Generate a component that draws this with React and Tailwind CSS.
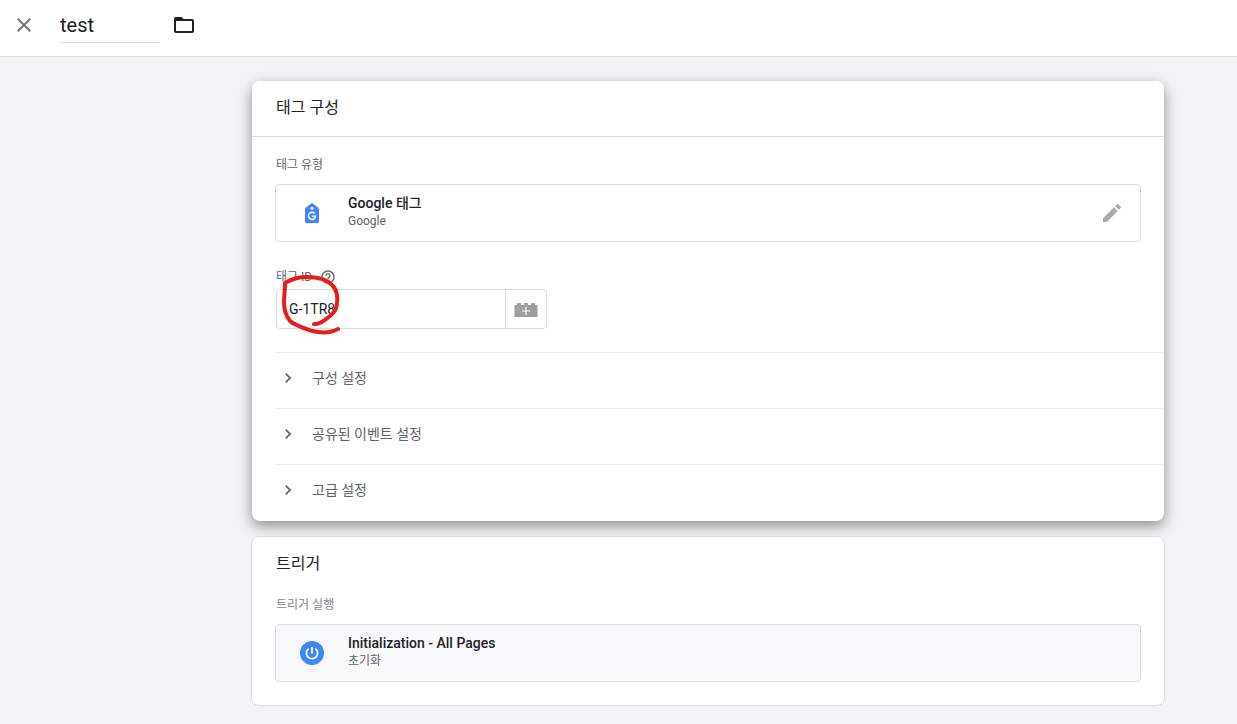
import React, { useState } from 'react';
import { MdEdit, MdHelpOutline, MdChevronRight, MdClose } from 'react-icons/md';

const FolderIcon = () => (
  <svg width="24" height="24" viewBox="0 0 24 24" aria-hidden="true">
    <path fill="#202124" d="M4 4H9.5L11.5 6H20Q22 6 22 8V18Q22 20 20 20H4Q2 20 2 18V6Q2 4 4 4Z" />
    <rect x="4" y="8" width="16" height="10" fill="#fff" />
  </svg>
);

const TagIcon = () => (
  <svg width="14" height="20" viewBox="0 0 14 20" aria-hidden="true">
    <path fill="#4285f4" d="M7 0 12.9 4.5Q14 5.4 14 6.6V18.5Q14 20 12.5 20H1.5Q0 20 0 18.5V6.6Q0 5.4 1.1 4.5Z" />
    <circle cx="7" cy="5.3" r="1.5" fill="#fff" />
    <path fill="none" stroke="#fff" strokeWidth="1.5" d="M9.6 10.5A3.5 3.5 0 1 0 10.5 13.2H7.2" />
  </svg>
);

const PowerIcon = () => (
  <svg width="24" height="24" viewBox="0 0 24 24" aria-hidden="true">
    <circle cx="12" cy="12" r="12" fill="#4285f4" />
    <path fill="none" stroke="#fff" strokeWidth="1.8" d="M12 6V12.6M8.6 7.6A5.6 5.6 0 1 0 15.4 7.6" />
  </svg>
);

const BrickIcon = () => (
  <svg width="24" height="16" viewBox="0 0 24 16" aria-hidden="true">
    <path fill="#9e9e9e" d="M3 2H7V4H10V2H14V4H17V2H21V4H23.5V16H.5V4H3Z" />
    <path fill="none" stroke="#fff" strokeWidth="1.2" d="M12 6V14M8 10H16" />
  </svg>
);

const RedCircle = () => (
  <svg className="pointer-events-none absolute -top-5 left-1" width="64" height="66" viewBox="281 270 64 66" aria-hidden="true">
    <path
      fill="none"
      stroke="#e81c1c"
      strokeWidth="4"
      strokeLinecap="round"
      strokeLinejoin="round"
      d="M314 324C319 325 325 320 330 316C335 312 337 308 337 303C338 296 337 290 332 285C326 278 316 277 306 277C298 277 290 280 285 283C285 290 284 297 284 302C284 309 286 316 290 321C294 325 304 328 312 331C321 333 331 333 338 329"
    />
  </svg>
);

const settings = ['구성 설정', '공유된 이벤트 설정', '고급 설정'];

const SummaryBox = ({ icon, title, subtitle, className, children }) => (
  <div className={`flex h-[58px] items-center rounded border border-[#dadce0] pr-4 ${className}`}>
    <div className="flex w-[72px] shrink-0 justify-center">{icon}</div>
    <div className="min-w-0 flex-1 pb-0.5">
      <div className="text-sm leading-[18px] font-medium text-[#202124]">{title}</div>
      <div className="text-xs leading-[18px] text-[#5f6368]">{subtitle}</div>
    </div>
    {children}
  </div>
);

const App = () => {
  const [name, setName] = useState('test');
  const [tagId, setTagId] = useState('G-1TR8');

  return (
    <div className="min-h-screen bg-[#f1f3f4] pb-[18px] font-[Roboto,'Noto_Sans_CJK_KR',sans-serif] text-[#202124]">
      {/* Header */}
      <header className="flex h-[57px] items-start border-b border-[#dadce0] bg-white px-3 pt-[9px]">
        <button type="button" aria-label="닫기" className="mt-1 text-[#757575]">
          <MdClose size={24} />
        </button>
        <input
          aria-label="태그 이름"
          value={name}
          onChange={(e) => setName(e.target.value)}
          className="ml-6 h-[34px] w-[100px] border-b border-[#dadce0] pb-0.5 text-xl outline-none"
        />
        <button type="button" aria-label="폴더" className="ml-3 mt-1">
          <FolderIcon />
        </button>
      </header>

      <main className="pt-6 pl-[179px]">
        <div className="mx-auto max-w-[914px]">
          {/* Tag configuration */}
          <section className="mx-px rounded-lg bg-white shadow-[0_5px_14px_rgba(0,0,0,0.42)]">
            <h2 className="flex h-14 items-center border-b border-[#dadce0] px-6 pb-0.5 text-base">태그 구성</h2>
            <div className="px-[23px] pt-[19px]">
              <h3 className="mb-2.5 pl-px text-xs leading-[18px] text-[#5f6368]">태그 유형</h3>
              <SummaryBox icon={<TagIcon />} title="Google 태그" subtitle="Google" className="bg-white">
                <button type="button" aria-label="수정" className="text-[#aaa]">
                  <MdEdit size={24} />
                </button>
              </SummaryBox>
            </div>
            <div className="px-6 pt-[26px] pb-[23px]">
              <div className="flex h-[21px] items-center gap-2 pb-1 text-[#5f6368]">
                <label htmlFor="tag-id" className="text-xs leading-[18px]">태그 ID</label>
                <MdHelpOutline size={16} />
              </div>
              <div className="relative flex h-10 w-[271px] rounded border border-[#dadce0]">
                <input
                  id="tag-id"
                  value={tagId}
                  onChange={(e) => setTagId(e.target.value)}
                  className="min-w-0 flex-1 px-3 text-sm outline-none"
                />
                <button type="button" aria-label="변수 선택" className="flex w-[41px] items-center justify-center border-l border-[#dadce0]">
                  <BrickIcon />
                </button>
                <RedCircle />
              </div>
            </div>
            <div className="pb-px pl-6">
              {settings.map((label) => (
                <button key={label} type="button" className="flex h-14 w-full items-center gap-3.5 border-t border-[#e8eaed] pb-1.5 pl-0.5 text-sm text-[#5f6368]">
                  <MdChevronRight size={20} />
                  <span>{label}</span>
                </button>
              ))}
            </div>
          </section>

          {/* Trigger */}
          <section className="mt-[15px] rounded-lg border border-[#dadce0] bg-white px-[23px] pb-[23px]">
            <h2 className="flex h-[54px] items-center pl-px text-base">트리거</h2>
            <h3 className="mt-[5px] mb-2.5 pl-px text-xs leading-[18px] text-[#80868b]">트리거 실행</h3>
            <SummaryBox icon={<PowerIcon />} title="Initialization - All Pages" subtitle="초기화" className="bg-[#f8f9fa]" />
          </section>
        </div>
      </main>
    </div>
  );
};

export default App;
